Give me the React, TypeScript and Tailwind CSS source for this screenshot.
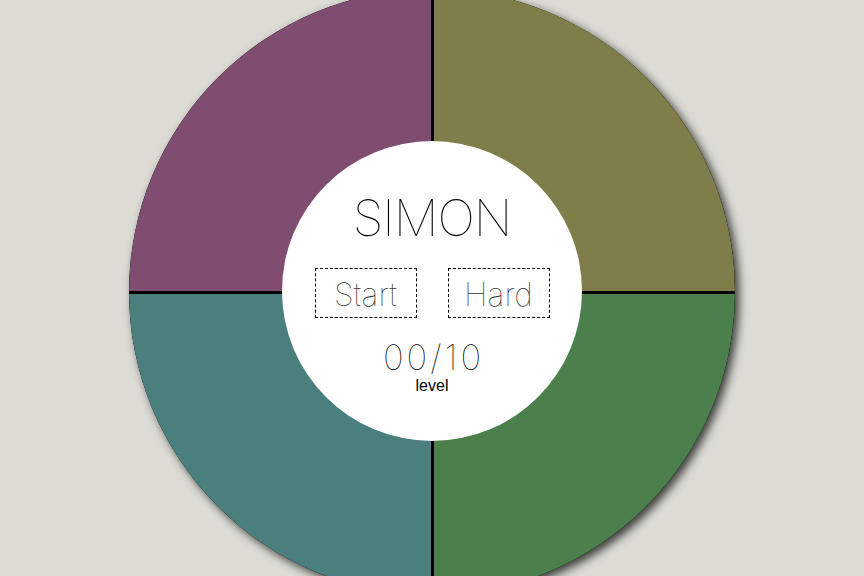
const Quadrant = ({ color, corner }: { color: string; corner: string }) => (
  <div className={`${color} ${corner} cursor-pointer`} />
);

export default function App() {
  return (
    <div className="w-full h-screen overflow-hidden bg-[#dcdcd5] flex justify-center">
      <div className="relative mt-[-11px] w-[606px] h-[606px] shrink-0 rounded-full bg-black shadow-[4px_4px_10px_rgba(0,0,0,0.75)]">
        <div className="grid grid-cols-2 grid-rows-2 gap-[3px] w-full h-full rounded-full overflow-hidden">
          <Quadrant color="bg-[#7f4d70]" corner="rounded-tl-full" />
          <Quadrant color="bg-[#7f7e4b]" corner="rounded-tr-full" />
          <Quadrant color="bg-[#4b7f7e]" corner="rounded-bl-full" />
          <Quadrant color="bg-[#4b7f4c]" corner="rounded-br-full" />
        </div>

        {/* centre panel */}
        <div className="absolute left-[153px] top-[152px] w-[300px] h-[300px] rounded-full bg-white flex flex-col items-center font-['Inter',sans-serif] text-black">
          <h1 className="mt-[52px] text-[50px] leading-none font-thin tracking-[-1px]">SIMON</h1>
          <div className="mt-[25px] flex gap-[31px]">
            <button className="w-[102px] h-[50px] border border-dashed border-black text-[32px] font-thin text-[#333] leading-none pt-[3px]">
              Start
            </button>
            <button className="w-[102px] h-[50px] border border-dashed border-black text-[32px] font-thin text-[#333] leading-none pt-[3px]">
              Hard
            </button>
          </div>
          <div className="mt-[22px] pl-[3px] text-[35px] leading-none font-thin tracking-[3px]">00/10</div>
          <div className="mt-[3px] text-[16px] leading-none font-['Liberation_Sans',sans-serif]">level</div>
        </div>
      </div>
    </div>
  );
}
